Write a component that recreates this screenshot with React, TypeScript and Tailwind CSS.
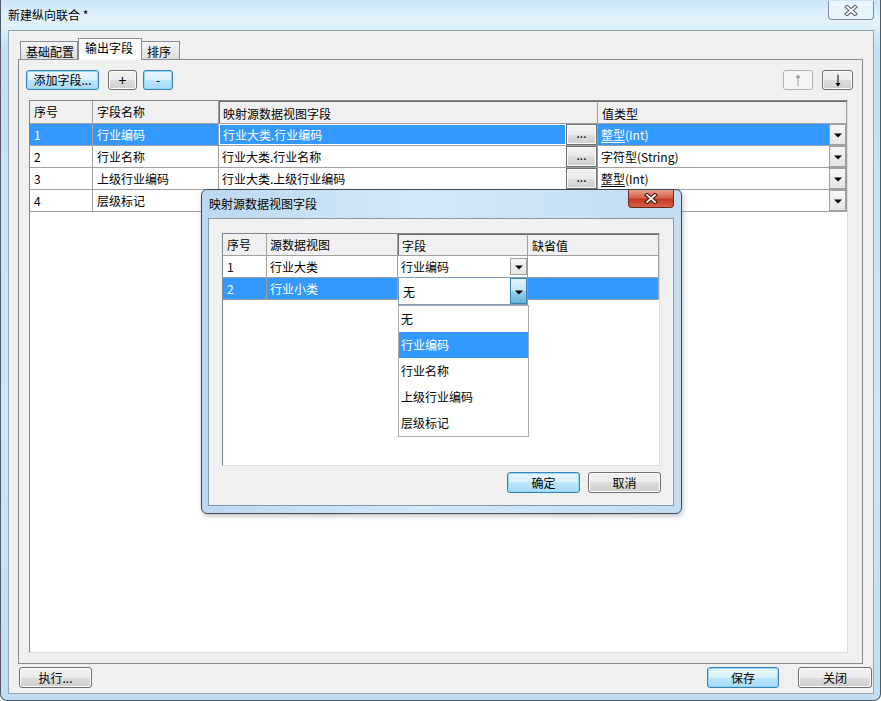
import React from "react";

const font = "font-['Microsoft_YaHei','Noto_Sans_CJK_SC',sans-serif]";

const greyBtn =
  "border-[#707070] bg-[linear-gradient(to_bottom,#f2f2f2_0%,#ebebeb_50%,#dddddd_50%,#cfcfcf_100%)] shadow-[inset_0_0_0_1px_#fbfbfb]";
const blueBtn =
  "border-[#3c7fb1] bg-[linear-gradient(to_bottom,#eaf6fd_0%,#d9f0fc_50%,#bee6fd_50%,#a7d9f5_100%)] shadow-[inset_0_0_0_1px_#8fdcfa]";

function Btn({
  children,
  blue,
  className = "",
}: {
  children?: React.ReactNode;
  blue?: boolean;
  className?: string;
}) {
  return (
    <div
      className={`flex shrink-0 items-center justify-center rounded-[3px] border text-[12px] leading-none ${
        blue ? blueBtn : greyBtn
      } ${className}`}
    >
      {children}
    </div>
  );
}

function DownTri({ color = "#000" }: { color?: string }) {
  return (
    <svg width="8" height="5" viewBox="0 0 8 5">
      <path d="M0 0.5 H8 L4 4.5 Z" fill={color} />
    </svg>
  );
}

function ComboBtn({ hover }: { hover?: boolean }) {
  return (
    <div
      className={`flex shrink-0 items-center justify-center border ${
        hover
          ? "border-[#3c7fb1] bg-[linear-gradient(to_bottom,#e3f4fc_0%,#c4e5f6_50%,#98d1ef_50%,#68b3db_100%)]"
          : "border-[#a0a0a0] bg-[linear-gradient(to_bottom,#f7f7f7,#e4e4e4)]"
      } h-full w-[17px] pt-[2px]`}
    >
      <DownTri />
    </div>
  );
}

function Arrow({ up, disabled }: { up?: boolean; disabled?: boolean }) {
  const c = disabled ? "#9a9a9a" : "#000";
  return (
    <svg width="8" height="13" viewBox="0 0 8 13">
      {up ? (
        <>
          <path d="M4 1 V12.5" stroke={c} strokeWidth="1" />
          <path d="M1.5 4 L4 0.5 L6.5 4 Z" fill={c} />
        </>
      ) : (
        <>
          <path d="M4 0.5 V12" stroke={c} strokeWidth="1" />
          <path d="M1.5 9 L4 12.5 L6.5 9 Z" fill={c} />
        </>
      )}
    </svg>
  );
}

// row 4 sits under the dialog, its mapping/type cells are hidden there
const mainRows = [
  { n: "1", name: "行业编码", map: "行业大类.行业编码", pre: "整型", post: "(Int)", sel: true },
  { n: "2", name: "行业名称", map: "行业大类.行业名称", pre: "字符型(String)", post: "" },
  { n: "3", name: "上级行业编码", map: "行业大类.上级行业编码", pre: "整型", post: "(Int)" },
  { n: "4", name: "层级标记", map: "", pre: "", post: "" },
];

function MainTable() {
  return (
    <div className="ml-[10px] mt-[10px] h-[553px] w-[819px] border border-b-[#dcdcdc] border-l-[#828790] border-r-[#dcdcdc] border-t-[#828790] bg-white">
      <div className="flex h-[23px] border-b border-[#a0a0a0] bg-[#f0f0f0]">
        <div className="flex w-[63px] items-center border-r border-[#a0a0a0] pl-[4px]">序号</div>
        <div className="flex w-[126px] items-center border-r border-[#a0a0a0] pl-[4px]">字段名称</div>
        <div className="flex w-[379px] items-center border-r border-l border-[#a0a0a0] border-l-[#696969] border-t border-t-[#696969] pl-[3px] pt-[2px]">
          映射源数据视图字段
        </div>
        <div className="flex w-[249px] items-center border-r border-[#a0a0a0] border-t border-t-[#696969] pl-[4px] pt-[2px]">
          值类型
        </div>
      </div>
      {mainRows.map((r) => {
        const sel = !!r.sel;
        const cell = sel ? "bg-[#3399ff] text-white" : "";
        return (
          <div key={r.n} className="flex h-[22px] border-b border-[#a0a0a0]">
            <div className={`flex w-[63px] items-center border-r border-[#a0a0a0] pl-[4px] ${cell}`}>{r.n}</div>
            <div className={`flex w-[126px] items-center border-r border-[#a0a0a0] pl-[4px] ${cell}`}>{r.name}</div>
            <div className="flex w-[379px] border-r border-[#a0a0a0]">
              <div
                className={`flex w-[347px] items-center pl-[3px] ${
                  sel ? "border border-white bg-[#3399ff] text-white" : ""
                }`}
              >
                {r.map}
              </div>
              <Btn className="!rounded-none h-[21px] w-[31px] items-end pb-[5px] text-[11px]">...</Btn>
            </div>
            <div className="flex w-[249px] border-r border-[#a0a0a0]">
              <div className={`flex w-[231px] items-center pl-[3px] ${cell}`}>
                <span className={r.post ? "underline decoration-1 underline-offset-2" : ""}>{r.pre}</span>
                {r.post}
              </div>
              <ComboBtn />
            </div>
          </div>
        );
      })}
    </div>
  );
}

function CloseX({ red }: { red?: boolean }) {
  return (
    <svg width="14" height="11" viewBox="0 0 14 11">
      <path d="M3 2 L11 9 M11 2 L3 9" stroke={red ? "#4a1208" : "#5d6670"} strokeWidth="4" strokeLinecap="square" />
      <path d="M3 2 L11 9 M11 2 L3 9" stroke="#fff" strokeWidth="1.8" strokeLinecap="square" />
    </svg>
  );
}

function Dialog() {
  return (
    <div className="absolute left-[200px] top-[189px] flex h-[325px] w-[481px] flex-col rounded-[6px] border border-[#3e4b57] bg-[linear-gradient(to_right,#bcd8ef_0%,#d3e8f8_45%,#c2dcf1_100%)] shadow-[1px_2px_5px_rgba(0,0,0,0.25)]">
      <div className="flex h-[28px] items-start">
        <span className="ml-[7px] mt-[7px] leading-[14px]">映射源数据视图字段</span>
        <div className="ml-auto mr-[7px] flex h-[18px] w-[46px] items-center justify-center rounded-b-[4px] border border-t-0 border-[#6b2a1f] bg-[linear-gradient(to_bottom,#e8a18e_0%,#d6634c_45%,#c23b22_55%,#d65f46_100%)]">
          <CloseX red />
        </div>
      </div>
      <div className="ml-[6px] h-[288px] w-[466px] border border-[#8b98a6] bg-[#f0f0f0]">
        <div className="ml-[13px] mt-[14px] h-[233px] w-[438px] border border-b-[#dcdcdc] border-l-[#828790] border-r-[#dcdcdc] border-t-[#828790] bg-white">
          <div className="flex h-[22px] border-b border-[#a0a0a0] bg-[#f0f0f0]">
            <div className="flex w-[44px] items-center border-r border-[#a0a0a0] pl-[4px]">序号</div>
            <div className="flex w-[131px] items-center border-r border-[#a0a0a0] pl-[3px]">源数据视图</div>
            <div className="flex w-[130px] items-center border-r border-l border-[#a0a0a0] border-l-[#696969] border-t border-t-[#696969] pl-[3px] pt-[2px]">
              字段
            </div>
            <div className="flex w-[131px] items-center border-r border-[#a0a0a0] border-t border-t-[#696969] pl-[4px] pt-[2px]">
              缺省值
            </div>
          </div>
          <div className="flex h-[22px] border-b border-[#a0a0a0]">
            <div className="flex w-[44px] items-center border-r border-[#a0a0a0] pl-[4px]">1</div>
            <div className="flex w-[131px] items-center border-r border-[#a0a0a0] pl-[3px]">行业大类</div>
            <div className="flex w-[130px] items-center border-r border-[#a0a0a0] py-[2px] pl-[3px]">
              <span className="flex-1">行业编码</span>
              <ComboBtn />
            </div>
            <div className="w-[131px] border-r border-[#a0a0a0]" />
          </div>
          <div className="flex h-[22px] border-b border-[#a0a0a0]">
            <div className="flex w-[44px] items-center border-r border-[#a0a0a0] bg-[#3399ff] pl-[4px] text-white">2</div>
            <div className="flex w-[131px] items-center border-r border-[#a0a0a0] bg-[#3399ff] pl-[3px] text-white">
              行业小类
            </div>
            <div className="relative w-[130px] border-r border-[#a0a0a0]">
              <div className="absolute left-0 top-[-1px] z-10 flex h-[28px] w-[130px] border border-[#7f9db9] bg-white">
                <span className="flex flex-1 items-center pl-[4px] pt-[1px]">无</span>
                <ComboBtn hover />
              </div>
              <div className="absolute left-0 top-[27px] z-10 flex h-[132px] w-[131px] flex-col border border-[#a6acb3] bg-white">
                <div className="flex h-[26px] items-center pl-[2px]">无</div>
                <div className="flex h-[26px] items-center bg-[#3399ff] pl-[2px] text-white">行业编码</div>
                <div className="flex h-[26px] items-center pl-[2px]">行业名称</div>
                <div className="flex h-[26px] items-center pl-[2px]">上级行业编码</div>
                <div className="flex h-[26px] items-center pl-[2px]">层级标记</div>
              </div>
            </div>
            <div className="w-[131px] border-r border-[#a0a0a0] bg-[#3399ff]" />
          </div>
        </div>
        <div className="mt-[6px] flex justify-end gap-[8px] pr-[12px]">
          <Btn blue className="h-[21px] w-[73px]">确定</Btn>
          <Btn className="h-[21px] w-[73px]">取消</Btn>
        </div>
      </div>
    </div>
  );
}

export default function App() {
  return (
    <div
      className={`relative h-[701px] w-[881px] overflow-hidden rounded-b-[7px] border-x border-b border-[#4f5a66] bg-[linear-gradient(to_bottom,#cbe6f6_0%,#e3f3fc_3%,#c2e0f3_7%,#cfe7f6_60%,#c0ddf1_100%)] text-[12px] leading-[14px] text-black ${font}`}
    >
      <div className="flex h-[30px] items-start">
        <span className="ml-[7px] mt-[8px]">新建纵向联合 *</span>
        <div className="ml-auto mr-[6px] mt-[1px] flex h-[19px] w-[46px] items-center justify-center rounded-b-[4px] border border-t-0 border-[#7f8b98] bg-[linear-gradient(to_bottom,rgba(255,255,255,0.6),rgba(255,255,255,0.25))]">
          <CloseX />
        </div>
      </div>
      <div className="ml-[7px] flex h-[664px] w-[866px] flex-col border border-[#98a3ae] bg-[#f0f0f0]">
        <div className="ml-[11px] mt-[7px] flex h-[21px] items-end">
          <div className="flex h-[18px] w-[58px] items-center border border-b-0 border-[#898c95] bg-[linear-gradient(to_bottom,#f3f3f3,#dedede)] pl-[5px] pt-[2px]">
            基础配置
          </div>
          <div className="relative z-10 mb-[-1px] flex h-[22px] w-[64px] items-center border border-b-0 border-[#898c95] bg-white pl-[6px] pb-[3px]">
            输出字段
          </div>
          <div className="flex h-[18px] w-[38px] items-center border border-b-0 border-l-0 border-[#898c95] bg-[linear-gradient(to_bottom,#f3f3f3,#dedede)] pl-[5px] pt-[2px]">
            排序
          </div>
        </div>
        <div className="ml-[9px] h-[605px] w-[845px] border border-[#898c95] bg-[#f0f0f0]">
          <div className="ml-[7px] mt-[10px] flex h-[20px]">
            <Btn blue className="h-[20px] w-[73px]">添加字段...</Btn>
            <Btn className="ml-[9px] h-[20px] w-[29px] text-[14px]">+</Btn>
            <Btn blue className="ml-[6px] h-[20px] w-[30px]">-</Btn>
            <div className="ml-auto flex h-[20px] w-[30px] items-center justify-center rounded-[3px] border border-[#adb2b5] bg-[#f4f4f4]">
              <Arrow up disabled />
            </div>
            <Btn className="ml-[9px] mr-[9px] h-[20px] w-[31px]">
              <Arrow />
            </Btn>
          </div>
          <MainTable />
        </div>
        <div className="ml-[10px] mr-[1px] mt-[3px] flex">
          <Btn className="h-[21px] w-[73px]">执行...</Btn>
          <Btn blue className="ml-auto h-[21px] w-[72px]">保存</Btn>
          <Btn className="ml-[19px] h-[21px] w-[74px]">关闭</Btn>
        </div>
      </div>
      <Dialog />
    </div>
  );
}
